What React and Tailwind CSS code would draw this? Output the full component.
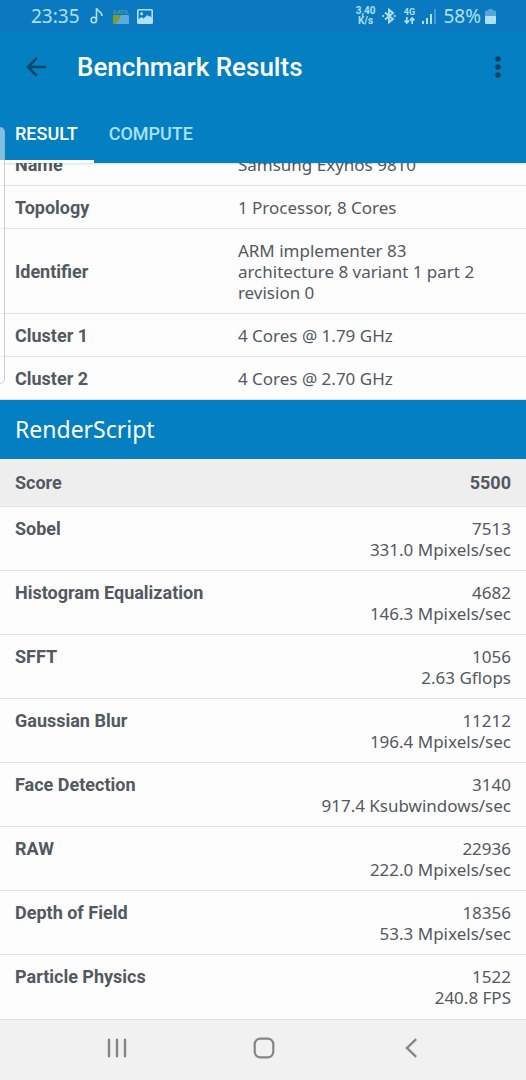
import React, { useState } from 'react';

const systemInfo = [
  { label: 'Name', value: 'Samsung Exynos 9810' },
  { label: 'Topology', value: '1 Processor, 8 Cores' },
  { label: 'Identifier', value: 'ARM implementer 83 architecture 8 variant 1 part 2 revision 0' },
  { label: 'Cluster 1', value: '4 Cores @ 1.79 GHz' },
  { label: 'Cluster 2', value: '4 Cores @ 2.70 GHz' }
];

const workloads = [
  { name: 'Sobel', score: 7513, rate: '331.0 Mpixels/sec' },
  { name: 'Histogram Equalization', score: 4682, rate: '146.3 Mpixels/sec' },
  { name: 'SFFT', score: 1056, rate: '2.63 Gflops' },
  { name: 'Gaussian Blur', score: 11212, rate: '196.4 Mpixels/sec' },
  { name: 'Face Detection', score: 3140, rate: '917.4 Ksubwindows/sec' },
  { name: 'RAW', score: 22936, rate: '222.0 Mpixels/sec' },
  { name: 'Depth of Field', score: 18356, rate: '53.3 Mpixels/sec' },
  { name: 'Particle Physics', score: 1522, rate: '240.8 FPS' }
];

const tabs = ['RESULT', 'COMPUTE'];

const StatusBar = () => (
  <div className="flex h-8 items-center justify-between bg-[#0b79bf] pl-[31px] pr-[30px] font-['Noto_Sans',sans-serif] text-[#aee0f7]">
    <div className="flex items-center">
      <span className="text-[19px] leading-6">23:35</span>
      {/* Music note */}
      <svg className="ml-2.5 h-4 w-[13px]" viewBox="0 0 13 16" fill="none" stroke="currentColor" strokeWidth="1.6">
        <circle cx="3.8" cy="12" r="2.7" />
        <path d="M6.500 12V1h.8c.3 2.400 4.700 2 4.700 7" />
      </svg>
      {/* Data usage */}
      <span className="ml-2.5 flex w-4 flex-col items-center">
        <span className="font-[Roboto,sans-serif] text-[6px] font-bold leading-[6px] text-[#4d95ae]">DATA</span>
        <svg className="h-[9px] w-4" viewBox="0 0 16 9">
          <rect width="16" height="9" rx="1" fill="#5fa9df" />
          <path d="M1 0h7.500L3 9H1a1 1 0 0 1-1-1V1a1 1 0 0 1 1-1z" fill="#7e9c2c" />
        </svg>
      </span>
      {/* Picture */}
      <svg className="ml-2 h-[15px] w-4" viewBox="0 0 16 15">
        <rect x="0.8" y="0.8" width="14.4" height="13.4" rx="0.8" fill="none" stroke="currentColor" strokeWidth="1.6" />
        <circle cx="4.6" cy="4.8" r="1.5" fill="currentColor" />
        <path d="M1 10.500 4.500 8l2 1.500L10.500 6l1.500 1.500L13 7l2 2v5H1z" fill="currentColor" />
      </svg>
    </div>

    <div className="flex items-center">
      <span className="flex flex-col items-center font-[Roboto,sans-serif] text-[10px] font-bold leading-[10px]">
        <span>3,40</span>
        <span>K/s</span>
      </span>
      {/* Bluetooth */}
      <svg className="ml-[7px] h-4 w-[14px]" viewBox="0 0 14 16" fill="none" stroke="currentColor" strokeWidth="1.9">
        <path d="M3 4.500 11 11 7 14.300V1.700L11 5 3 11.500" />
        <circle cx="1.2" cy="8" r="0.7" fill="currentColor" strokeWidth="1" />
        <circle cx="12.8" cy="8" r="0.7" fill="currentColor" strokeWidth="1" />
      </svg>
      {/* Mobile data */}
      <span className="ml-[7px] flex w-3 flex-col items-center">
        <span className="font-[Roboto,sans-serif] text-[9px] font-bold leading-[9px]">4G</span>
        <svg className="h-[7px] w-[11px]" viewBox="0 0 11 7" fill="none" stroke="currentColor" strokeWidth="1.7">
          <path d="M2.800 0v6M.6 3.600 2.800 6 5 3.600M8.200 7V1M6 3.400 8.200 1l2.200 2.400" />
        </svg>
      </span>
      {/* Signal */}
      <svg className="ml-[7px] h-[15px] w-[14px]" viewBox="0 0 14 15" fill="currentColor">
        <path d="M0 12h2v3H0zM4 9h2v6H4zM8 5h2v10H8z" />
        <path d="M12 0h2v15h-2z" opacity="0.35" />
      </svg>
      <span className="ml-[7px] text-[19px] leading-6">58%</span>
      {/* Battery */}
      <svg className="ml-1 h-[15px] w-[11px]" viewBox="0 0 11 15" fill="currentColor">
        <path d="M3.500 0h4v1.500H10a1 1 0 0 1 1 1V7H0V2.500a1 1 0 0 1 1-1h2.500z" opacity="0.45" />
        <path d="M0 7h11v7a1 1 0 0 1-1 1H1a1 1 0 0 1-1-1z" />
      </svg>
    </div>
  </div>
);

const Toolbar = () => (
  <div className="flex h-[70px] items-center px-4">
    <button type="button" aria-label="Back" className="flex size-10 items-center justify-center">
      <svg className="size-5" viewBox="0 0 20 20" fill="none" stroke="#0b4668" strokeWidth="2.5">
        <path d="M20 10H1.800M11 .9 1.900 10l9.100 9.100" />
      </svg>
    </button>
    <h1 className="ml-[21px] flex-1 text-[26px] font-medium leading-8 text-white">Benchmark Results</h1>
    <button type="button" aria-label="More options" className="flex h-10 w-6 items-center justify-center">
      <svg className="h-[22px] w-1.5" viewBox="0 0 6 22" fill="#0b4263">
        <circle cx="3" cy="3" r="2.7" />
        <circle cx="3" cy="11" r="2.7" />
        <circle cx="3" cy="19" r="2.7" />
      </svg>
    </button>
  </div>
);

const NavBar = () => (
  <nav className="flex h-[61px] items-center justify-center gap-[107px] border-t border-[#e0e0e0] bg-[#f1f1f1] pb-1 pl-0.5">
    <button type="button" aria-label="Recent apps" className="flex size-10 items-center justify-center">
      <svg className="size-5" viewBox="0 0 20 20" stroke="#858585" strokeWidth="2.4" strokeLinecap="round">
        <path d="M2 1.700v16.600M10 1.700v16.600M18 1.700v16.600" />
      </svg>
    </button>
    <button type="button" aria-label="Home" className="flex size-10 items-center justify-center">
      <svg className="size-[22px]" viewBox="0 0 22 22" fill="none" stroke="#858585" strokeWidth="2.2">
        <rect x="1.7" y="1.7" width="18.6" height="18.6" rx="5.5" />
      </svg>
    </button>
    <button type="button" aria-label="Back" className="flex size-10 items-center justify-center">
      <svg className="h-5 w-3" viewBox="0 0 12 20" fill="none" stroke="#858585" strokeWidth="2.4">
        <path d="M11.200 1.200 2 10l9.200 8.800" />
      </svg>
    </button>
  </nav>
);

const App = () => {
  const [activeTab, setActiveTab] = useState('RESULT');

  return (
    <div className="relative flex min-h-screen flex-col overflow-hidden bg-[#fdfdfd] font-[Roboto,sans-serif] text-[#525960]">
      <header className="relative z-10 bg-[#047fc1] shadow-sm">
        <StatusBar />
        <Toolbar />
        <div role="tablist" className="flex h-[61px]">
          {tabs.map(tab => (
            <button
              key={tab}
              type="button"
              role="tab"
              aria-selected={activeTab === tab}
              onClick={() => setActiveTab(tab)}
              className={
                activeTab === tab
                  ? 'border-b-[3px] border-white pl-[15px] pr-4 pt-1 text-[18px] font-medium text-white'
                  : 'border-b-[3px] border-transparent pl-[15px] pr-4 pt-1 text-[18px] font-medium text-[#a9e2fb]'
              }
            >
              {tab}
            </button>
          ))}
        </div>
      </header>

      <main className="-mt-5 flex-1">
        <table className="w-full table-fixed text-[18px] leading-[21px]">
          <tbody>
            {systemInfo.map(row => (
              <tr key={row.label} className="border-b border-[#e2e2e2]">
                <th scope="row" className="w-[42%] pb-2.5 pl-[15px] pt-[11px] text-left font-bold">
                  {row.label}
                </th>
                <td className="pb-2.5 pl-[17px] pr-10 pt-[11px] font-['Noto_Sans',sans-serif] text-[17px]">{row.value}</td>
              </tr>
            ))}
          </tbody>
        </table>

        <h2 className="bg-[#047fc1] px-[15px] py-[15px] font-['Noto_Sans',sans-serif] text-[23px] leading-[29px] text-white">
          RenderScript
        </h2>

        <table className="w-full text-[18px] leading-[21px]">
          <tbody>
            <tr className="border-b border-[#e2e2e2] bg-[#eeeeee]">
              <th scope="row" className="py-[13px] pl-[15px] text-left font-bold">Score</th>
              <td className="py-[13px] pr-[15px] text-right font-bold">5500</td>
            </tr>
            {workloads.map(item => (
              <tr key={item.name} className="border-b border-[#e2e2e2] last:border-b-0">
                <th scope="row" className="pb-2.5 pl-[15px] pt-[11px] text-left align-top font-bold">
                  {item.name}
                </th>
                <td className="pb-2.5 pr-[15px] pt-[11px] text-right font-['Noto_Sans',sans-serif] text-[17px]">
                  <div>{item.score}</div>
                  <div>{item.rate}</div>
                </td>
              </tr>
            ))}
          </tbody>
        </table>
      </main>

      <NavBar />

      {/* Edge panel handle */}
      <div className="absolute left-0 top-[127px] z-20 h-[257px] w-[5px] rounded-r-md border border-l-0 border-gray-400/50 bg-white/50" />
    </div>
  );
};

export default App;
